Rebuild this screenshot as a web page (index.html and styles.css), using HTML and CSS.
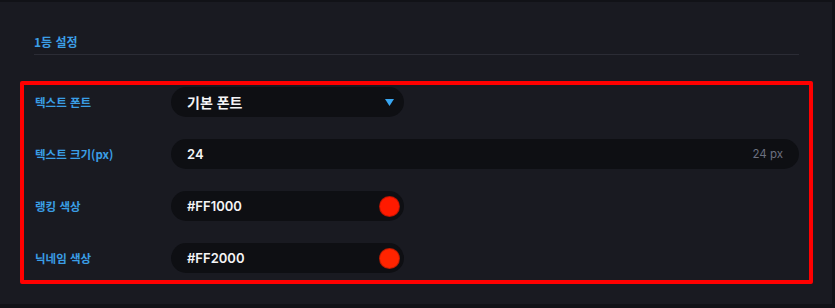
FILE: index.html
```html
<!DOCTYPE html>
<html lang="ko">
<head>
<meta charset="utf-8">
<link rel="stylesheet" href="styles.css">
</head>
<body>
<div class="card">
  <div class="section-title">1등 설정</div>
  <div class="rows">
    <div class="row">
      <div class="label">텍스트 폰트</div>
      <div class="field short select">
        <span class="value ko">기본 폰트</span>
        <svg class="arrow" width="9" height="7" viewBox="0 0 9 7"><path d="M0 0H9L4.5 7Z" fill="#39a7f2"/></svg>
      </div>
    </div>
    <div class="row">
      <div class="label">텍스트 크기(px)</div>
      <div class="field wide">
        <span class="value">24</span>
        <span class="unit">24 px</span>
      </div>
    </div>
    <div class="row">
      <div class="label">랭킹 색상</div>
      <div class="field short color">
        <span class="value">#FF1000</span>
        <span class="swatch swatch-1"></span>
      </div>
    </div>
    <div class="row">
      <div class="label">닉네임 색상</div>
      <div class="field short color">
        <span class="value">#FF2000</span>
        <span class="swatch swatch-2"></span>
      </div>
    </div>
  </div>
</div>
</body>
</html>
```
FILE: styles.css
```css
html, body {
  margin: 0;
  padding: 0;
}
body {
  width: 835px;
  height: 308px;
  background: #111217;
  font-family: "Noto Sans CJK KR", "Noto Sans", sans-serif;
  overflow: hidden;
}
.card {
  box-sizing: border-box;
  margin-top: 2px;
  width: 832px;
  height: 302px;
  background: #191a21;
  padding: 32px 0 0 20px;
}
.section-title {
  margin: 0 33px 0 14px;
  padding-bottom: 4px;
  border-bottom: 1px solid #2b2c35;
  color: #3c9fe6;
  font-size: 12px;
  font-weight: 700;
  line-height: 16px;
}
.rows {
  box-sizing: border-box;
  margin-top: 26px;
  width: 793px;
  border: 4px solid #ff0000;
  border-radius: 2px;
  padding: 2px 10px 7px 11px;
  display: flex;
  flex-direction: column;
  gap: 22px;
}
.row {
  display: flex;
  align-items: center;
  height: 30px;
}
.label {
  width: 136px;
  flex: none;
  color: #3a9ee5;
  font-size: 11.5px;
  font-weight: 700;
}
.field {
  box-sizing: border-box;
  height: 30px;
  border-radius: 15px;
  background: #0e0f13;
  display: flex;
  align-items: center;
  justify-content: space-between;
  padding: 0 16px;
}
.short {
  width: 233px;
}
.wide {
  flex: 1;
}
.value {
  color: #f4f4f6;
  font-family: "Inter", "Noto Sans CJK KR", sans-serif;
  font-size: 13px;
  font-weight: 600;
}
.value.ko {
  font-family: "Noto Sans CJK KR", sans-serif;
  font-size: 14px;
  font-weight: 700;
}
.select {
  padding-right: 10px;
}
.arrow {
  display: block;
}
.unit {
  color: #6c7080;
  font-family: "Inter", sans-serif;
  font-size: 11.5px;
}
.color {
  padding-right: 4px;
}
.swatch {
  width: 21px;
  height: 21px;
  border-radius: 50%;
  box-sizing: border-box;
  border: 1px solid rgba(0, 0, 0, 0.25);
}
.swatch-1 {
  background: #ff1a00;
}
.swatch-2 {
  background: #ff2400;
}
```
